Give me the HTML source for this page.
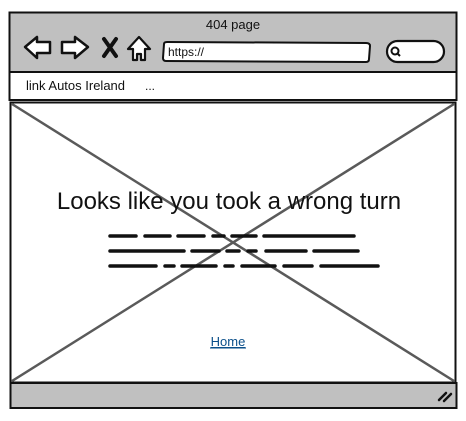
<!DOCTYPE html>
<html><head><meta charset="utf-8"><style>
html,body{margin:0;padding:0;background:#fff;width:466px;height:421px;overflow:hidden}
svg{display:block}
text{font-family:"Liberation Sans",sans-serif}
</style></head><body>
<svg width="466" height="421" viewBox="0 0 466 421" xmlns="http://www.w3.org/2000/svg">
<rect x="9.5" y="12.5" width="447" height="60" fill="#c0c0c0" stroke="#111" stroke-width="2"/>
<text x="233" y="29" font-size="13" text-anchor="middle" fill="#111">404 page</text>
<path d="M25 47 L37 37 L37 42 L50 42 L50 53 L37 53 L37 58 Z" fill="#fff" stroke="#111" stroke-width="2.5" stroke-linejoin="round"/>
<path d="M88 47 L75 37 L75 42 L62 42 L62 53 L75 53 L75 58 Z" fill="#fff" stroke="#111" stroke-width="2.5" stroke-linejoin="round"/>
<path d="M104 39 L116 56 M116 39 L104 56" stroke="#111" stroke-width="4" stroke-linecap="round"/>
<path d="M128 49 L139 37 L150 49 L145 49 L145 60 L141 60 L141 54 L137 54 L137 60 L133 60 L133 49 Z" fill="#fff" stroke="#111" stroke-width="2.2" stroke-linejoin="round"/>
<path d="M164 44 Q164 42 167 42 L366 43 Q370 43 370 46 L369 59 Q369 62 366 62 L166 61 Q163 61 163 58 Z" fill="#fff" stroke="#111" stroke-width="2"/>
<text x="168" y="56" font-size="12" fill="#111">https://</text>
<rect x="387" y="41" width="57" height="21" rx="10.5" fill="#fff" stroke="#111" stroke-width="2.2"/>
<circle cx="395" cy="51" r="3.5" fill="none" stroke="#111" stroke-width="2"/>
<path d="M397.5 53.5 L400 56" stroke="#111" stroke-width="2"/>
<rect x="9.5" y="72" width="447" height="28" fill="#fff" stroke="#111" stroke-width="2"/>
<text x="26" y="90" font-size="13" fill="#111">link Autos Ireland</text>
<text x="145" y="90" font-size="12" fill="#111">...</text>
<rect x="10.5" y="102.5" width="445" height="280" fill="#fff" stroke="#111" stroke-width="2"/>
<path d="M12 104 L454 381 M454 104 L12 381" stroke="#5a5a5a" stroke-width="2.5"/>
<text x="229" y="209" font-size="24" text-anchor="middle" fill="#111">Looks like you took a wrong turn</text>
<g stroke="#111" stroke-width="3.5" stroke-linecap="round">
<path d="M110 236 H136 M145 236 H170 M178 236 H204 M213 236 H224 M232 236 H256 M264 236 H354"/>
<path d="M110 251 H184 M192 251 H219 M227 251 H239 M248 251 H256 M266 251 H306 M314 251 H358"/>
<path d="M110 266 H156 M165 266 H174 M182 266 H216 M225 266 H233 M242 266 H275 M284 266 H312 M321 266 H378"/>
</g>
<text x="228" y="346" font-size="13" text-anchor="middle" fill="#0b4f8a" text-decoration="underline">Home</text>
<line x1="210" y1="348" x2="246" y2="348" stroke="#0b4f8a" stroke-width="1"/>
<rect x="10.5" y="383" width="446" height="25" fill="#c0c0c0" stroke="#111" stroke-width="2"/>
<path d="M439 400 L446 393 M444 401 L451 394" stroke="#111" stroke-width="2.5" stroke-linecap="round"/>
</svg>
</body></html>
